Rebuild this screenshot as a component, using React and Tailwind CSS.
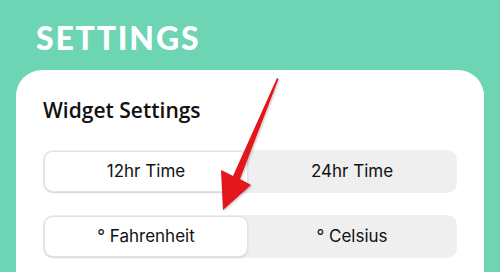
export default function App() {
  return (
    <div className="relative w-[500px] h-[272px] overflow-hidden bg-[#6dd5b4]">
      <div className="pl-[36px] pt-[22px] h-[70px]">
        <div className="text-white text-[32px] leading-none tracking-[1.8px] font-black font-['Lato',sans-serif]">SETTINGS</div>
      </div>
      <div className="mx-[16px] h-[220px] rounded-t-[26px] bg-white px-[27px] pt-[27px]">
        <div className="text-[21px] leading-[26px] font-semibold text-[#111] font-['Open_Sans',sans-serif]">Widget Settings</div>
        <div className="mt-[27px] flex h-[43px] rounded-[10px] bg-[#efefef] p-[1px]">
          <div className="flex w-[204px] items-center justify-center rounded-[9px] border border-[#e2e2e2] bg-white shadow-[0_1px_2px_rgba(0,0,0,0.12)] text-[17px] text-[#111] font-['Inter',sans-serif]">12hr Time</div>
          <div className="flex flex-1 items-center justify-center text-[17px] text-[#111] font-['Inter',sans-serif]">24hr Time</div>
        </div>
        <div className="mt-[22px] flex h-[43px] rounded-[10px] bg-[#efefef] p-[1px]">
          <div className="flex w-[204px] items-center justify-center rounded-[9px] border border-[#e2e2e2] bg-white shadow-[0_1px_2px_rgba(0,0,0,0.12)] text-[17px] text-[#111] font-['Inter',sans-serif]">° Fahrenheit</div>
          <div className="flex flex-1 items-center justify-center text-[17px] text-[#111] font-['Inter',sans-serif]">° Celsius</div>
        </div>
      </div>
      <svg className="absolute left-0 top-0" width="500" height="272" viewBox="0 0 500 272">
        <defs>
          <filter id="s" x="-20%" y="-20%" width="140%" height="140%">
            <feDropShadow dx="1" dy="1" stdDeviation="1.2" floodColor="#000" floodOpacity="0.25" />
          </filter>
        </defs>
        <polygon filter="url(#s)" fill="#e3131b" points="277,78 278.5,79 240,179 251,185 223,210 221,170 233,176" />
      </svg>
    </div>
  );
}
